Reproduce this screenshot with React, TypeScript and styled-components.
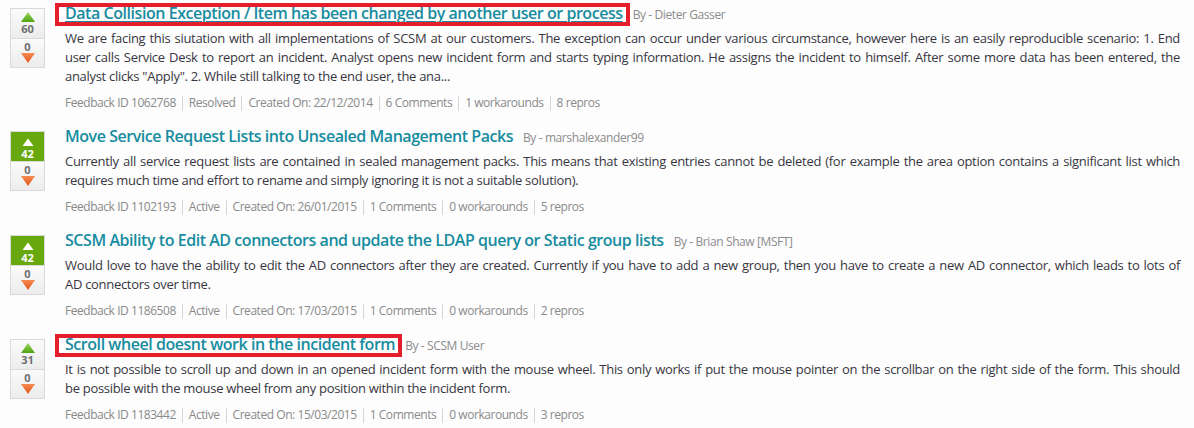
import React from "react";
import styled, { createGlobalStyle, css } from "styled-components";

const GlobalStyle = createGlobalStyle`
  html, body { margin: 0; padding: 0; background: #fdfdfd; }
  body { font-family: "Open Sans", "Noto Sans", "Liberation Sans", sans-serif; }
`;

type Item = {
  votes: number;
  voted: boolean;
  title: string;
  underline?: boolean;
  highlight?: boolean;
  by: string;
  body: string[];
  id: string;
  status: string;
  date: string;
  comments: string;
  workarounds: string;
  repros: string;
};

const items: Item[] = [
  {
    votes: 60,
    voted: false,
    title: "Data Collision Exception / Item has been changed by another user or process",
    underline: true,
    highlight: true,
    by: "Dieter Gasser",
    body: [
      "We are facing this siutation with all implementations of SCSM at our customers. The exception can occur under various circumstance, however here is an easily reproducible scenario: 1. End",
      "user calls Service Desk to report an incident. Analyst opens new incident form and starts typing information. He assigns the incident to himself. After some more data has been entered, the",
      'analyst clicks "Apply". 2. While still talking to the end user, the ana...',
    ],
    id: "1062768",
    status: "Resolved",
    date: "22/12/2014",
    comments: "6 Comments",
    workarounds: "1 workarounds",
    repros: "8 repros",
  },
  {
    votes: 42,
    voted: true,
    title: "Move Service Request Lists into Unsealed Management Packs",
    by: "marshalexander99",
    body: [
      "Currently all service request lists are contained in sealed management packs. This means that existing entries cannot be deleted (for example the area option contains a significant list which",
      "requires much time and effort to rename and simply ignoring it is not a suitable solution).",
    ],
    id: "1102193",
    status: "Active",
    date: "26/01/2015",
    comments: "1 Comments",
    workarounds: "0 workarounds",
    repros: "5 repros",
  },
  {
    votes: 42,
    voted: true,
    title: "SCSM Ability to Edit AD connectors and update the LDAP query or Static group lists",
    by: "Brian Shaw [MSFT]",
    body: [
      "Would love to have the ability to edit the AD connectors after they are created. Currently if you have to add a new group, then you have to create a new AD connector, which leads to lots of",
      "AD connectors over time.",
    ],
    id: "1186508",
    status: "Active",
    date: "17/03/2015",
    comments: "1 Comments",
    workarounds: "0 workarounds",
    repros: "2 repros",
  },
  {
    votes: 31,
    voted: false,
    title: "Scroll wheel doesnt work in the incident form",
    highlight: true,
    by: "SCSM User",
    body: [
      "It is not possible to scroll up and down in an opened incident form with the mouse wheel. This only works if put the mouse pointer on the scrollbar on the right side of the form. This should",
      "be possible with the mouse wheel from any position within the incident form.",
    ],
    id: "1183442",
    status: "Active",
    date: "15/03/2015",
    comments: "1 Comments",
    workarounds: "0 workarounds",
    repros: "3 repros",
  },
];

const List = styled.div`
  display: flex;
  flex-direction: column;
  gap: 13px;
  padding: 2px 14px 0 10px;
`;

const Row = styled.div`
  display: flex;
  align-items: flex-start;
  gap: 20px;
`;

const VoteBox = styled.div`
  margin-top: 6px;
  width: 35px;
  flex: none;
  box-sizing: border-box;
  border: 1px solid #dadada;
  display: flex;
  flex-direction: column;
`;

const VotePart = styled.div<{ $active?: boolean; $down?: boolean }>`
  height: 29px;
  box-sizing: border-box;
  display: flex;
  flex-direction: column;
  align-items: center;
  padding-top: ${(p) => (p.$down ? "1px" : "3px")};
  background: linear-gradient(#fbfbfb, #ececec);
  ${(p) =>
    p.$active &&
    css`
      background: #68a80f;
      padding-top: 5px;
    `}
  ${(p) =>
    p.$down &&
    css`
      border-top: 1px solid #dadada;
    `}
`;

const Count = styled.span<{ $active?: boolean }>`
  font-family: "Open Sans", "Liberation Sans", sans-serif;
  font-size: 11px;
  font-weight: 700;
  line-height: 13px;
  color: ${(p) => (p.$active ? "#ffffff" : "#6e6e6e")};
`;

const Content = styled.div`
  flex: 1;
  min-width: 0;
  display: flex;
  flex-direction: column;
`;

const TitleLine = styled.div`
  display: flex;
  align-items: baseline;
  gap: 10px;
  line-height: 22px;
  white-space: nowrap;
`;

const TitleLink = styled.a<{ $underline?: boolean; $highlight?: boolean }>`
  position: relative;
  font-family: "Open Sans", "Noto Sans", sans-serif;
  font-size: 16px;
  font-weight: 600;
  letter-spacing: -0.45px;
  color: #178ca0;
  text-decoration: ${(p) => (p.$underline ? "underline" : "none")};
  text-decoration-thickness: 1px;
  text-underline-offset: 2px;
  ${(p) =>
    p.$highlight &&
    css`
      &::after {
        content: "";
        position: absolute;
        left: -10px;
        right: -7px;
        top: 1px;
        bottom: -2px;
        border: 4px solid #e41e2b;
        pointer-events: none;
      }
    `}
`;

const ByLine = styled.span`
  font-size: 12px;
  letter-spacing: -0.4px;
  color: #8c8c8c;
`;

const Body = styled.div`
  margin-top: 3px;
  font-size: 13px;
  letter-spacing: -0.3px;
  line-height: 19px;
  color: #383642;
`;

const BodyLine = styled.span<{ $last?: boolean }>`
  display: block;
  white-space: nowrap;
  text-align: justify;
  text-align-last: ${(p) => (p.$last ? "left" : "justify")};
`;

const Meta = styled.div`
  margin-top: 8px;
  display: flex;
  align-items: center;
  font-size: 12px;
  letter-spacing: -0.45px;
  line-height: 18px;
  color: #8a8a8a;
  white-space: nowrap;
`;

const Sep = styled.span`
  width: 1px;
  height: 15px;
  background: #d6d6d6;
  margin: 0 6px;
`;

const UpArrow = ({ active }: { active: boolean }) => (
  <svg width="14" height="10" viewBox="0 0 14 10" style={{ display: "block" }}>
    <defs>
      <linearGradient id="upg" x1="0" y1="0" x2="0" y2="1">
        <stop offset="0" stopColor="#9bd85c" />
        <stop offset="1" stopColor="#4fa311" />
      </linearGradient>
    </defs>
    {active ? (
      <polygon points="7,1.5 12.5,9 1.5,9" fill="#ffffff" />
    ) : (
      <polygon points="7,0 14,10 0,10" fill="url(#upg)" />
    )}
  </svg>
);

const DownArrow = () => (
  <svg width="14" height="10" viewBox="0 0 14 10" style={{ display: "block" }}>
    <defs>
      <linearGradient id="dng" x1="0" y1="0" x2="0" y2="1">
        <stop offset="0" stopColor="#f58a4e" />
        <stop offset="1" stopColor="#e1581f" />
      </linearGradient>
    </defs>
    <polygon points="0,0 14,0 7,10" fill="url(#dng)" />
  </svg>
);

const FeedbackRow = ({ item }: { item: Item }) => (
  <Row>
    <VoteBox>
      <VotePart $active={item.voted}>
        <UpArrow active={item.voted} />
        <Count $active={item.voted}>{item.votes}</Count>
      </VotePart>
      <VotePart $down>
        <Count>0</Count>
        <DownArrow />
      </VotePart>
    </VoteBox>
    <Content>
      <TitleLine>
        <TitleLink href="#" $underline={item.underline} $highlight={item.highlight}>
          {item.title}
        </TitleLink>
        <ByLine>By - {item.by}</ByLine>
      </TitleLine>
      <Body>
        {item.body.map((l, i) => (
          <BodyLine key={i} $last={i === item.body.length - 1}>
            {l}
          </BodyLine>
        ))}
      </Body>
      <Meta>
        <span>Feedback ID {item.id}</span>
        <Sep />
        <span>{item.status}</span>
        <Sep />
        <span>Created On: {item.date}</span>
        <Sep />
        <span>{item.comments}</span>
        <Sep />
        <span>{item.workarounds}</span>
        <Sep />
        <span>{item.repros}</span>
      </Meta>
    </Content>
  </Row>
);

export default function App() {
  return (
    <>
      <GlobalStyle />
      <List>
        {items.map((it, i) => (
          <FeedbackRow key={i} item={it} />
        ))}
      </List>
    </>
  );
}
